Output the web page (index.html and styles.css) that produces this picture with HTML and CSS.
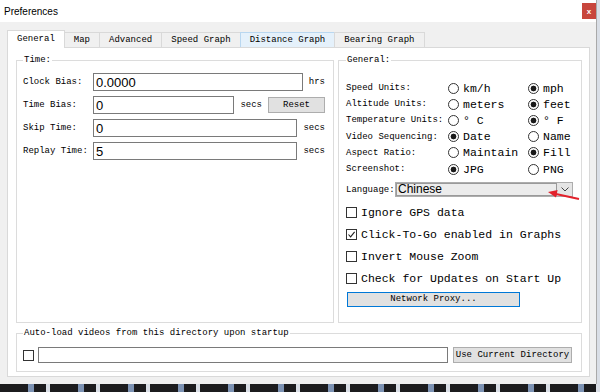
FILE: index.html
```html
<!DOCTYPE html>
<html lang="en">
<head>
    <meta charset="UTF-8">
    <title>Preferences</title>
    <link rel="stylesheet" href="styles.css">
</head>
<body>
    <div class="window">
        <div class="titlebar">
            <span class="title">Preferences</span>
            <span class="close">x</span>
        </div>

        <div class="client">
            <!-- tab strip -->
            <div class="tabs">
                <div class="tab active">General</div>
                <div class="tab">Map</div>
                <div class="tab">Advanced</div>
                <div class="tab">Speed Graph</div>
                <div class="tab hover">Distance Graph</div>
                <div class="tab">Bearing Graph</div>
            </div>

            <div class="pane">
                <div class="top-row">
                    <fieldset class="group time-group">
                        <legend>Time:</legend>
                        <div class="time-rows">
                            <div class="field-row">
                                <label>Clock Bias:</label>
                                <input class="text-input" type="text" value="0.0000">
                                <span class="unit">hrs</span>
                            </div>
                            <div class="field-row">
                                <label>Time Bias:</label>
                                <input class="text-input" type="text" value="0">
                                <span class="unit">secs</span>
                                <button class="btn reset-btn">Reset</button>
                            </div>
                            <div class="field-row">
                                <label>Skip Time:</label>
                                <input class="text-input" type="text" value="0">
                                <span class="unit">secs</span>
                            </div>
                            <div class="field-row">
                                <label>Replay Time:</label>
                                <input class="text-input" type="text" value="5">
                                <span class="unit">secs</span>
                            </div>
                        </div>
                    </fieldset>

                    <fieldset class="group general-group">
                        <legend>General:</legend>
                        <div class="units-grid">
                            <span class="opt-label">Speed Units:</span>
                            <span class="radio"><i class="dot"></i>km/h</span>
                            <span class="radio checked"><i class="dot"></i>mph</span>

                            <span class="opt-label">Altitude Units:</span>
                            <span class="radio"><i class="dot"></i>meters</span>
                            <span class="radio checked"><i class="dot"></i>feet</span>

                            <span class="opt-label">Temperature Units:</span>
                            <span class="radio"><i class="dot"></i>° C</span>
                            <span class="radio checked"><i class="dot"></i>° F</span>

                            <span class="opt-label">Video Sequencing:</span>
                            <span class="radio checked"><i class="dot"></i>Date</span>
                            <span class="radio"><i class="dot"></i>Name</span>

                            <span class="opt-label">Aspect Ratio:</span>
                            <span class="radio"><i class="dot"></i>Maintain</span>
                            <span class="radio checked"><i class="dot"></i>Fill</span>

                            <span class="opt-label">Screenshot:</span>
                            <span class="radio checked"><i class="dot"></i>JPG</span>
                            <span class="radio"><i class="dot"></i>PNG</span>
                        </div>

                        <div class="lang-row">
                            <span class="opt-label">Language:</span>
                            <div class="combo">
                                <span class="combo-value">Chinese</span>
                                <span class="combo-arrow">
                                    <svg width="8" height="5" viewBox="0 0 8 5"><path d="M0.5 0.5 L4 4 L7.5 0.5" fill="none" stroke="#444" stroke-width="1"/></svg>
                                </span>
                            </div>
                        </div>

                        <div class="check-list">
                            <div class="check"><i class="box"></i>Ignore GPS data</div>
                            <div class="check">
                                <i class="box">
                                    <svg width="9" height="9" viewBox="0 0 9 9"><path d="M1.5 4.5 L3.6 6.8 L7.6 1.8" fill="none" stroke="#222" stroke-width="1.1"/></svg>
                                </i>Click-To-Go enabled in Graphs
                            </div>
                            <div class="check"><i class="box"></i>Invert Mouse Zoom</div>
                            <div class="check"><i class="box"></i>Check for Updates on Start Up</div>
                        </div>

                        <button class="btn proxy-btn">Network Proxy...</button>
                    </fieldset>
                </div>

                <fieldset class="group autoload-group">
                    <legend>Auto-load videos from this directory upon startup</legend>
                    <div class="dir-row">
                        <i class="box"></i>
                        <input class="text-input dir-input" type="text" value="">
                        <button class="btn dir-btn">Use Current Directory</button>
                    </div>
                </fieldset>
            </div>
        </div>
    </div>

    <!-- red callout arrow over the language box -->
    <svg class="callout" width="600" height="392" viewBox="0 0 600 392">
        <line x1="579" y1="199" x2="556" y2="194" stroke="#e3212b" stroke-width="2"/>
        <polygon points="548,192 557.6,190 556,197.6" fill="#e3212b"/>
    </svg>
</body>
</html>
```

FILE: styles.css
```css
* {
    box-sizing: border-box;
}

body {
    margin: 0;
    width: 600px;
    height: 392px;
    overflow: hidden;
    position: relative;
    background: #2b2526 repeating-linear-gradient(90deg, #1c1c1e 0 28px, #7d93b4 28px 34px, #1c1c1e 34px 46px, #d9dee6 46px 50px);
    font-family: "Liberation Mono", monospace;
    font-size: 9px;
    color: #000;
}

.window {
    width: 597px;
    height: 384px;
    background: #f0f0f0;
    border-right: 1px solid #a9a9a9;
    display: flex;
    flex-direction: column;
}

.titlebar {
    height: 22px;
    background: #fff;
    display: flex;
    align-items: flex-start;
    justify-content: space-between;
}

.title {
    font-family: "Liberation Sans", Arial, sans-serif;
    font-size: 10px;
    line-height: 11px;
    padding: 6px 0 0 4px;
}

.close {
    width: 14px;
    height: 16px;
    margin-top: 3px;
    background: #c8463d;
    color: #fff;
    font-family: "Liberation Sans", Arial, sans-serif;
    font-size: 8px;
    font-weight: bold;
    display: flex;
    align-items: center;
    justify-content: center;
}

.client {
    flex: 1;
    padding-top: 8px;
    background: #f0f0f0;
}

/* tabs */
.tabs {
    display: flex;
    align-items: flex-end;
    height: 18px;
    padding-left: 7px;
    margin-bottom: -1px;
    position: relative;
    z-index: 1;
}

.tab {
    height: 15px;
    margin-bottom: 1px;
    margin-left: -1px;
    padding: 0 9px;
    border: 1px solid #d9d9d9;
    border-bottom: none;
    background: #f0f0f0;
    line-height: 14px;
    white-space: nowrap;
}

.tab:first-child {
    margin-left: 0;
}

.tab.active {
    height: 18px;
    margin-bottom: 0;
    background: #fff;
    line-height: 16px;
    position: relative;
    z-index: 2;
}

.tab.hover {
    background: #e5f1fb;
    border-color: #b9d7f0;
}

.pane {
    margin-left: 7px;
    width: 583px;
    height: 330px;
    background: #fff;
    border: 1px solid #d9d9d9;
    padding: 7px 7px 4px 8px;
    display: flex;
    flex-direction: column;
    gap: 5px;
}

.top-row {
    display: flex;
    gap: 4px;
    height: 268px;
}

/* group boxes */
.group {
    margin: 0;
    min-width: 0;
    border: 1px solid #dcdcdc;
}

.group legend {
    padding: 0 1px;
    font-size: 9px;
    line-height: 11px;
}

.time-group {
    width: 318px;
    padding: 7px 8px 0 6px;
}

.time-rows {
    display: flex;
    flex-direction: column;
    gap: 5px;
}

.field-row {
    display: flex;
    align-items: center;
    height: 18px;
}

.field-row label {
    flex: 0 0 70px;
    white-space: nowrap;
}

.text-input {
    flex: 1;
    min-width: 0;
    height: 18px;
    margin: 0;
    padding: 0 2px;
    border: 1px solid #7a7a7a;
    background: #fff;
    font-family: "Liberation Sans", Arial, sans-serif;
    font-size: 13px;
    color: #000;
    outline: none;
}

.unit {
    margin-left: 6px;
}

.btn {
    margin: 0;
    padding: 0;
    background: #e1e1e1;
    border: 1px solid #adadad;
    font-family: "Liberation Mono", monospace;
    font-size: 9px;
    color: #000;
    white-space: nowrap;
}

.reset-btn {
    width: 57px;
    height: 16px;
    margin-left: 6px;
}

.general-group {
    flex: 1;
    padding: 14px 6px 0 7px;
}

.units-grid {
    display: grid;
    grid-template-columns: 102px 80px 1fr;
    grid-auto-rows: 16.2px;
    align-items: center;
}

.opt-label {
    white-space: nowrap;
}

.radio {
    display: flex;
    align-items: center;
    gap: 4px;
    font-size: 11.5px;
    white-space: nowrap;
}

.dot {
    width: 11px;
    height: 11px;
    border: 1px solid #333;
    border-radius: 50%;
    background: #fff;
    flex: none;
}

.radio.checked .dot {
    background: radial-gradient(circle, #1a1a1a 0 2.6px, #fff 3.2px);
}

.lang-row {
    display: flex;
    align-items: center;
    height: 15px;
    margin-top: 5px;
}

.lang-row .opt-label {
    width: 49px;
}

.combo {
    width: 178px;
    height: 15px;
    border: 1px solid #adadad;
    background: #e5e5e5;
    display: flex;
}

.combo-value {
    flex: 1;
    background: #ececec;
    border: 1px solid #9a9a9a;
    font-family: "Liberation Sans", Arial, sans-serif;
    font-size: 12px;
    line-height: 11px;
    padding-left: 1px;
}

.combo-arrow {
    width: 15px;
    display: flex;
    align-items: center;
    justify-content: center;
}

.check-list {
    margin-top: 5px;
}

.check {
    height: 21.7px;
    display: flex;
    align-items: center;
    gap: 4px;
    font-size: 11.5px;
    white-space: nowrap;
}

.box {
    width: 11px;
    height: 11px;
    border: 1px solid #333;
    background: #fff;
    flex: none;
    display: flex;
    align-items: center;
    justify-content: center;
}

.proxy-btn {
    display: block;
    width: 173px;
    height: 15px;
    margin: 3px 0 0 1px;
    border-color: #0078d7;
    line-height: 13px;
}

.autoload-group {
    height: 44px;
    padding: 8px 9px 8px 6px;
}

.dir-row {
    display: flex;
    align-items: center;
    height: 16px;
}

.dir-input {
    height: 16px;
    margin-left: 4px;
}

.dir-btn {
    width: 119px;
    height: 16px;
    margin-left: 5px;
}

.callout {
    position: absolute;
    left: 0;
    top: 0;
    pointer-events: none;
}
```
